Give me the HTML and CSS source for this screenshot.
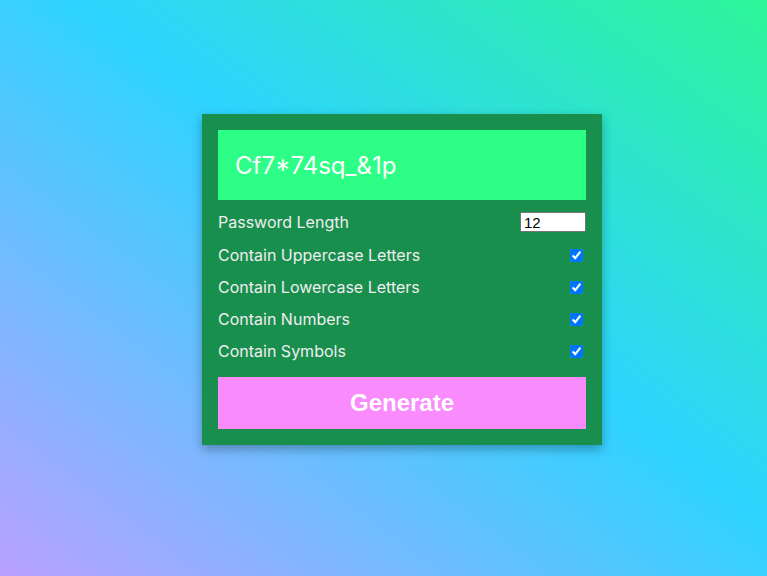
FILE: index.html
```html
<!DOCTYPE html>
<html>
<head>
<meta charset="utf-8">
<link rel="stylesheet" href="styles.css">
</head>
<body>
<div class="card">
  <div class="display">Cf7*74sq_&amp;1p</div>
  <div class="row first">
    <label>Password Length</label>
    <input type="number" class="num" value="12">
  </div>
  <div class="row">
    <label>Contain Uppercase Letters</label>
    <input type="checkbox" checked>
  </div>
  <div class="row">
    <label>Contain Lowercase Letters</label>
    <input type="checkbox" checked>
  </div>
  <div class="row">
    <label>Contain Numbers</label>
    <input type="checkbox" checked>
  </div>
  <div class="row">
    <label>Contain Symbols</label>
    <input type="checkbox" checked>
  </div>
  <button class="gen">Generate</button>
</div>
</body>
</html>
```

FILE: styles.css
```css
html, body {
  margin: 0;
  height: 100%;
}
body {
  background: linear-gradient(to top right, #b9a1ff 0%, #2dd4ff 55%, #2ef598 100%);
  display: flex;
  justify-content: center;
  align-items: center;
  padding-left: 37px;
  padding-bottom: 17px;
  box-sizing: border-box;
  font-family: Inter, "Noto Sans", sans-serif;
}
.card {
  width: 400px;
  box-sizing: border-box;
  padding: 16px;
  background: #198f4e;
  box-shadow: 0 4px 10px rgba(0, 0, 0, 0.3);
  display: flex;
  flex-direction: column;
}
.display {
  height: 70px;
  background: #2dff86;
  color: #fff;
  font-size: 24px;
  display: flex;
  align-items: center;
  padding-left: 17px;
  margin-bottom: 5px;
}
.row {
  height: 32px;
  display: flex;
  align-items: center;
  justify-content: space-between;
  color: #eeeeee;
  font-size: 16px;
}
.row.first {
  height: 34px;
}
.num {
  width: 66px;
  height: 20px;
  box-sizing: border-box;
  margin: 0;
  padding: 0 2px;
  font-family: Arial, "Liberation Sans", sans-serif;
  font-size: 15px;
}
.gen {
  margin-top: 10px;
  height: 52px;
  border: none;
  background: #f98bfd;
  color: #fff;
  font-family: "Liberation Sans", Arial, sans-serif;
  font-weight: bold;
  font-size: 24px;
  padding: 0;
}
```
